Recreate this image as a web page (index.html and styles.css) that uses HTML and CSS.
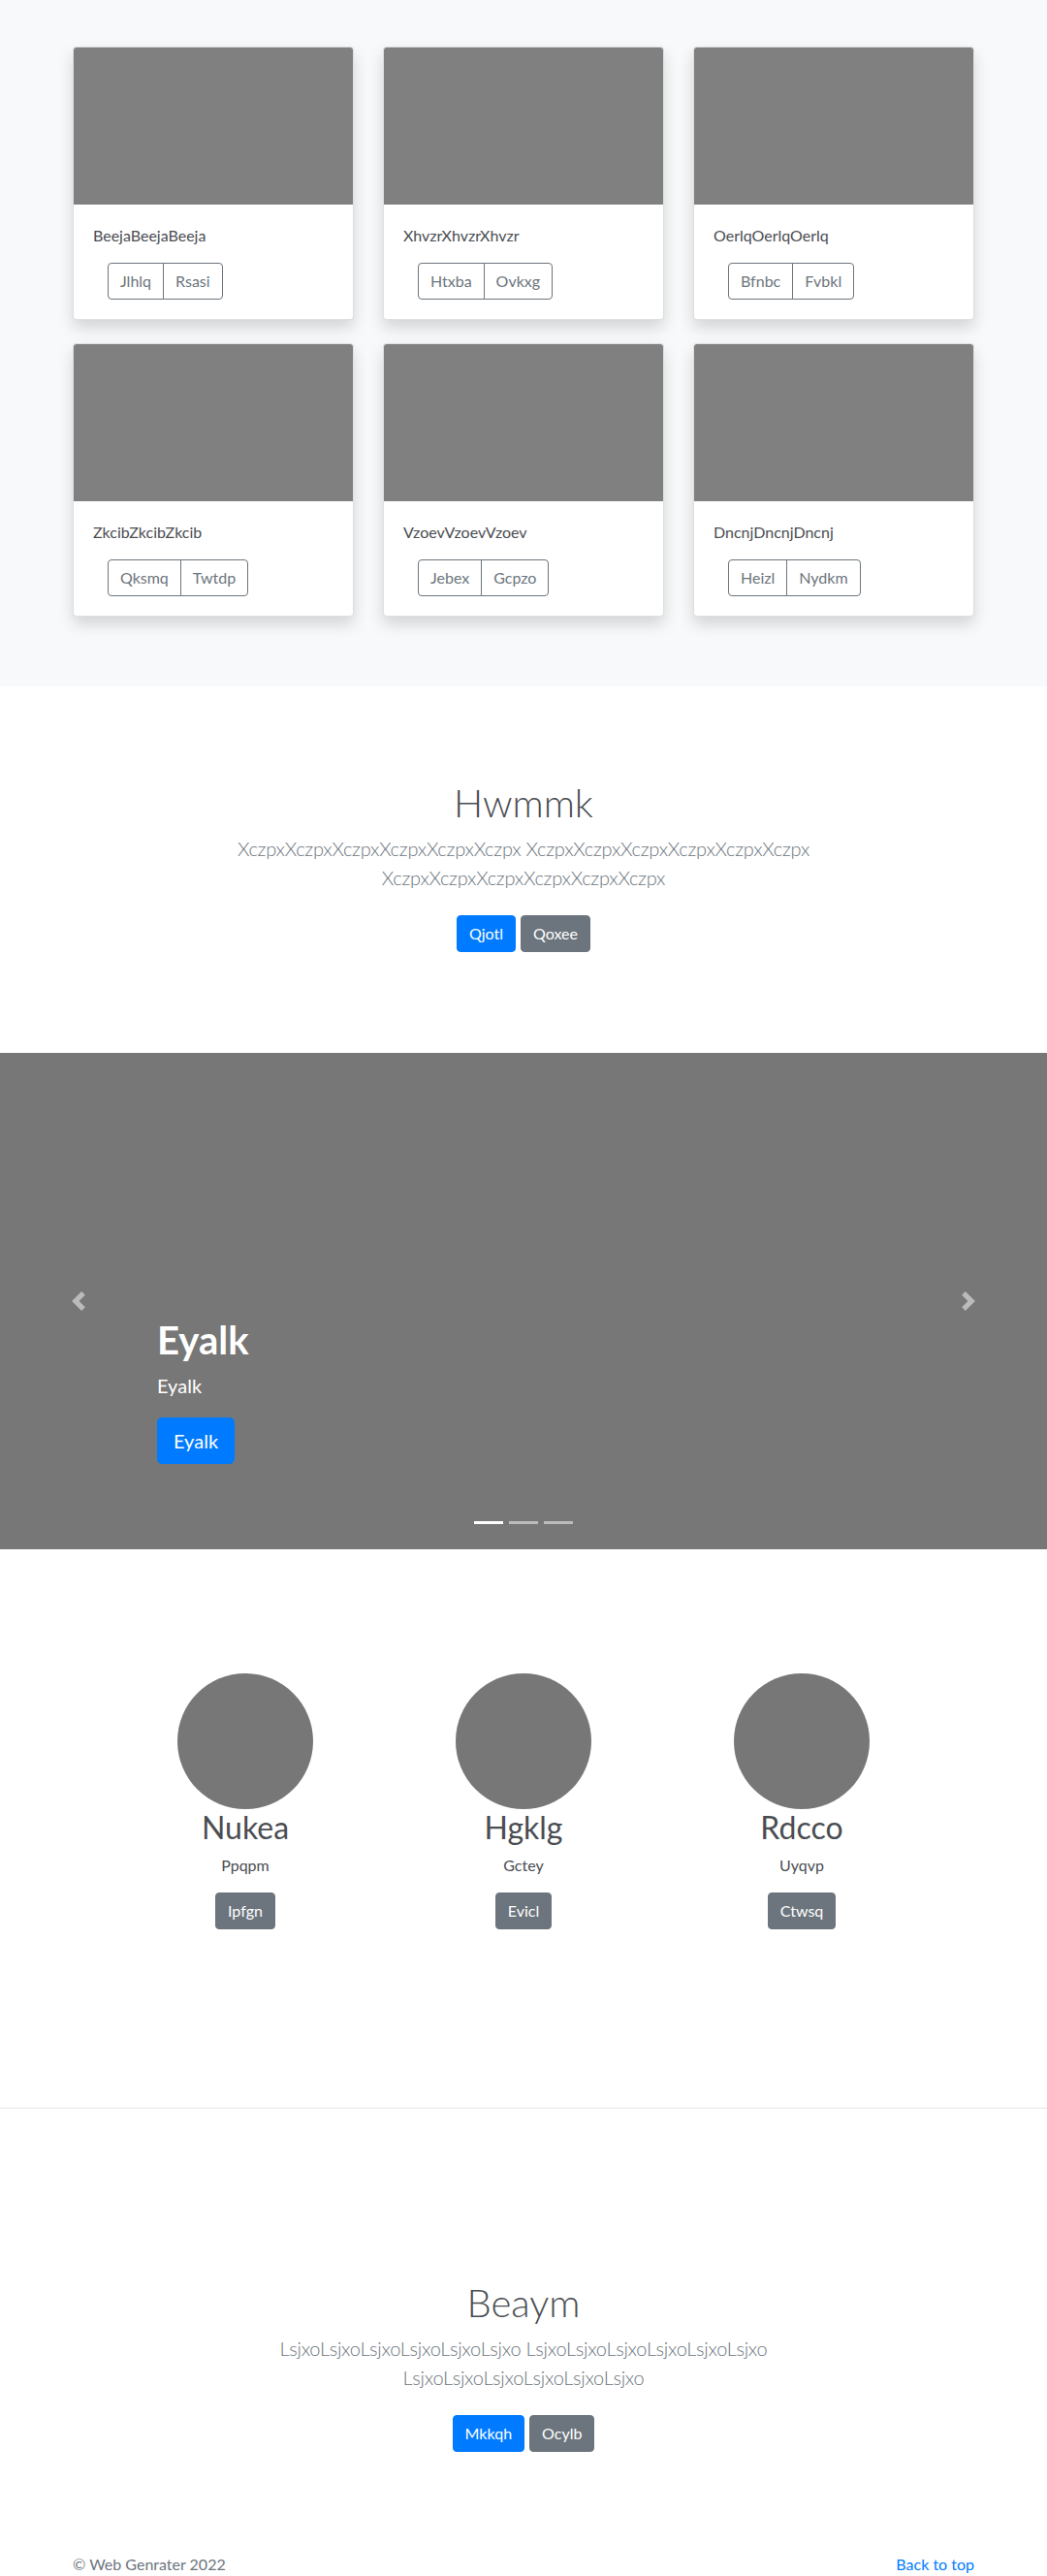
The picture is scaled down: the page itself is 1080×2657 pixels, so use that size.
FILE: index.html
```html
<!DOCTYPE html>
<html lang="en">
<head>
<meta charset="utf-8">
<title>Album</title>
<link rel="stylesheet" href="styles.css">
</head>
<body>
<main>
  <section class="album">
    <div class="album-grid">
      <div class="card">
        <div class="card-img"></div>
        <div class="card-body">
          <p class="card-text">BeejaBeejaBeeja</p>
          <div class="btn-group"><a class="btn btn-outline">Jlhlq</a><a class="btn btn-outline">Rsasi</a></div>
        </div>
      </div>
      <div class="card">
        <div class="card-img"></div>
        <div class="card-body">
          <p class="card-text">XhvzrXhvzrXhvzr</p>
          <div class="btn-group"><a class="btn btn-outline">Htxba</a><a class="btn btn-outline">Ovkxg</a></div>
        </div>
      </div>
      <div class="card">
        <div class="card-img"></div>
        <div class="card-body">
          <p class="card-text">OerlqOerlqOerlq</p>
          <div class="btn-group"><a class="btn btn-outline">Bfnbc</a><a class="btn btn-outline">Fvbkl</a></div>
        </div>
      </div>
      <div class="card">
        <div class="card-img"></div>
        <div class="card-body">
          <p class="card-text">ZkcibZkcibZkcib</p>
          <div class="btn-group"><a class="btn btn-outline">Qksmq</a><a class="btn btn-outline">Twtdp</a></div>
        </div>
      </div>
      <div class="card">
        <div class="card-img"></div>
        <div class="card-body">
          <p class="card-text">VzoevVzoevVzoev</p>
          <div class="btn-group"><a class="btn btn-outline">Jebex</a><a class="btn btn-outline">Gcpzo</a></div>
        </div>
      </div>
      <div class="card">
        <div class="card-img"></div>
        <div class="card-body">
          <p class="card-text">DncnjDncnjDncnj</p>
          <div class="btn-group"><a class="btn btn-outline">Heizl</a><a class="btn btn-outline">Nydkm</a></div>
        </div>
      </div>
    </div>
  </section>

  <section class="jumbotron">
    <div class="jumbo-inner">
      <h1 class="jumbo-heading">Hwmmk</h1>
      <p class="lead">XczpxXczpxXczpxXczpxXczpxXczpx XczpxXczpxXczpxXczpxXczpxXczpx XczpxXczpxXczpxXczpxXczpxXczpx</p>
      <p class="actions"><a class="btn btn-primary">Qjotl</a><a class="btn btn-secondary">Qoxee</a></p>
    </div>
  </section>

  <section class="carousel">
    <ol class="indicators">
      <li class="active"></li>
      <li></li>
      <li></li>
    </ol>
    <div class="caption">
      <h1 class="caption-title">Eyalk</h1>
      <p class="caption-text">Eyalk</p>
      <p class="caption-action"><a class="btn btn-lg btn-primary">Eyalk</a></p>
    </div>
    <a class="control control-prev">
      <svg class="control-icon" viewBox="0 0 8 8" width="20" height="20"><path fill="#fff" d="M5.25 0l-4 4 4 4 1.5-1.5L4.25 4l2.5-2.5L5.25 0z"/></svg>
    </a>
    <a class="control control-next">
      <svg class="control-icon" viewBox="0 0 8 8" width="20" height="20"><path fill="#fff" d="M2.75 0l-1.5 1.5L3.75 4l-2.5 2.5L2.75 8l4-4-4-4z"/></svg>
    </a>
  </section>

  <section class="team">
    <div class="team-grid">
      <div class="member">
        <div class="avatar"></div>
        <h2 class="member-name">Nukea</h2>
        <p class="member-role">Ppqpm</p>
        <p class="member-action"><a class="btn btn-secondary">Ipfgn</a></p>
      </div>
      <div class="member">
        <div class="avatar"></div>
        <h2 class="member-name">Hgklg</h2>
        <p class="member-role">Gctey</p>
        <p class="member-action"><a class="btn btn-secondary">Evicl</a></p>
      </div>
      <div class="member">
        <div class="avatar"></div>
        <h2 class="member-name">Rdcco</h2>
        <p class="member-role">Uyqvp</p>
        <p class="member-action"><a class="btn btn-secondary">Ctwsq</a></p>
      </div>
    </div>
  </section>

  <hr class="divider">

  <section class="jumbotron">
    <div class="jumbo-inner">
      <h1 class="jumbo-heading">Beaym</h1>
      <p class="lead">LsjxoLsjxoLsjxoLsjxoLsjxoLsjxo LsjxoLsjxoLsjxoLsjxoLsjxoLsjxo LsjxoLsjxoLsjxoLsjxoLsjxoLsjxo</p>
      <p class="actions"><a class="btn btn-primary">Mkkqh</a><a class="btn btn-secondary">Ocylb</a></p>
    </div>
  </section>
</main>

<footer class="footer">
  <div class="footer-inner">
    <p class="copyright">© Web Genrater 2022</p>
    <p class="back"><a class="back-link">Back to top</a></p>
  </div>
</footer>
</body>
</html>
```

FILE: styles.css
```css
* {
  box-sizing: border-box;
}

html, body {
  margin: 0;
  padding: 0;
}

body {
  font-family: Lato, "Open Sans", sans-serif;
  font-size: 16px;
  line-height: 1.5;
  color: #4a4d52;
  background: #fff;
}

p, h1, h2 {
  margin: 0;
}

a {
  text-decoration: none;
  cursor: pointer;
}

/* Buttons */
.btn {
  display: inline-block;
  font-size: 16px;
  line-height: 24px;
  padding: 6px 12px;
  border: 1px solid transparent;
  border-radius: 4px;
  text-align: center;
  white-space: nowrap;
}

.btn-primary {
  background: #007bff;
  border-color: #007bff;
  color: #fff;
}

.btn-secondary {
  background: #6c757d;
  border-color: #6c757d;
  color: #fff;
}

.btn-outline {
  background: transparent;
  border-color: #6c757d;
  color: #6c757d;
}

.btn-lg {
  font-size: 20px;
  line-height: 30px;
  padding: 8px 16px;
  border-radius: 5px;
}

/* Album */
.album {
  background: #f8f9fa;
  padding: 48px 0 72px;
}

.album-grid {
  width: 930px;
  margin: 0 auto;
  display: grid;
  grid-template-columns: repeat(3, 290px);
  column-gap: 30px;
  row-gap: 24px;
}

.card {
  background: #fff;
  border: 1px solid rgba(0, 0, 0, 0.125);
  border-radius: 4px;
  box-shadow: 0 8px 16px rgba(0, 0, 0, 0.15);
  overflow: hidden;
}

.card-img {
  height: 162px;
  background: #808080;
}

.card-body {
  padding: 20px;
}

.card-text {
  margin-bottom: 16px;
}

.btn-group {
  display: flex;
  margin-left: 15px;
}

.btn-group .btn:first-child {
  border-top-right-radius: 0;
  border-bottom-right-radius: 0;
}

.btn-group .btn + .btn {
  margin-left: -1px;
  border-top-left-radius: 0;
  border-bottom-left-radius: 0;
}

/* Jumbotron */
.jumbotron {
  padding: 96px 0;
  text-align: center;
  background: #fff;
}

.jumbo-inner {
  max-width: 640px;
  margin: 0 auto;
  padding: 0 15px;
}

.jumbo-heading {
  font-size: 40px;
  line-height: 48px;
  font-weight: 300;
  margin-bottom: 8px;
}

.lead {
  font-size: 20px;
  line-height: 30px;
  font-weight: 300;
  letter-spacing: -0.25px;
  color: #6c757d;
  margin-bottom: 16px;
}

.actions {
  display: flex;
  justify-content: center;
  gap: 5px;
  padding: 8px 0;
}

/* Carousel */
.carousel {
  position: relative;
  height: 512px;
  background: #777;
  margin-bottom: 64px;
  overflow: hidden;
}

.indicators {
  position: absolute;
  left: 0;
  right: 0;
  bottom: 0;
  margin: 0 0 16px;
  padding: 0;
  list-style: none;
  display: flex;
  justify-content: center;
  z-index: 2;
}

.indicators li {
  width: 30px;
  height: 23px;
  margin: 0 3px;
  border-top: 10px solid transparent;
  border-bottom: 10px solid transparent;
  background: #fff;
  background-clip: padding-box;
  opacity: 0.5;
}

.indicators li.active {
  opacity: 1;
}

.caption {
  position: absolute;
  left: 15%;
  right: 15%;
  bottom: 48px;
  padding: 20px 0 24px;
  color: #fff;
  text-align: left;
  z-index: 1;
}

.caption-title {
  font-size: 40px;
  line-height: 48px;
  font-weight: 700;
  margin-bottom: 8px;
}

.caption-text {
  font-size: 20px;
  line-height: 30px;
  margin-bottom: 18px;
}

.caption-action {
  display: flex;
  margin-bottom: 16px;
}

.control {
  position: absolute;
  top: 0;
  bottom: 0;
  width: 15%;
  display: flex;
  align-items: center;
  justify-content: center;
  opacity: 0.5;
}

.control-prev {
  left: 0;
}

.control-next {
  right: 0;
}

.control-icon {
  display: block;
  width: 20px;
  height: 20px;
}

/* Team */
.team {
  padding: 64px 0 64px;
}

.team-grid {
  width: 861px;
  margin: 0 auto;
  display: grid;
  grid-template-columns: repeat(3, 287px);
}

.member {
  text-align: center;
  margin-bottom: 24px;
}

.avatar {
  width: 140px;
  height: 140px;
  border-radius: 50%;
  background: #777;
  margin: 0 auto;
}

.member-name {
  font-size: 32px;
  line-height: 38px;
  font-weight: 400;
  margin-bottom: 8px;
}

.member-role {
  margin: 0 12px 16px;
}

.member-action {
  display: flex;
  justify-content: center;
  margin-bottom: 16px;
}

.divider {
  margin: 80px 0 80px;
  border: 0;
  border-top: 1px solid rgba(0, 0, 0, 0.1);
  height: 0;
}

/* Footer */
.footer {
  padding: 0 0 48px;
  color: #6c757d;
}

.footer-inner {
  width: 930px;
  margin: 0 auto;
  display: flex;
  justify-content: space-between;
}

.back-link {
  color: #007bff;
}
```
